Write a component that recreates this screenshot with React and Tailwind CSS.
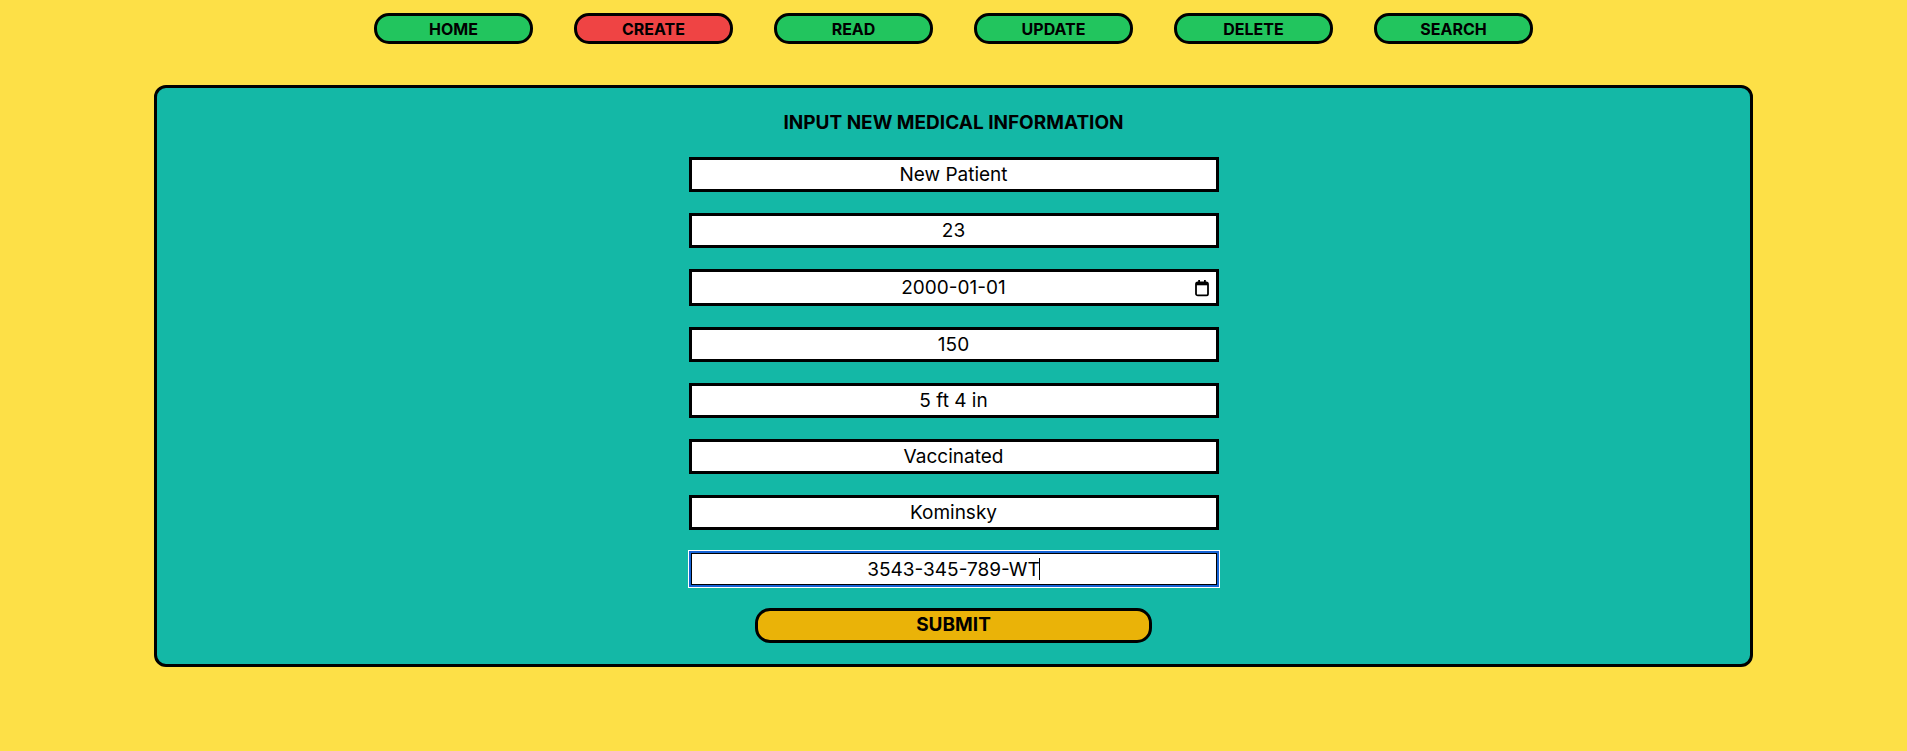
import React from 'react'

const navItems = ['HOME', 'CREATE', 'READ', 'UPDATE', 'DELETE', 'SEARCH']

const fields = [
    { name: 'name', value: 'New Patient' },
    { name: 'age', value: '23' },
    { name: 'dob', value: '2000-01-01', date: true },
    { name: 'weight', value: '150' },
    { name: 'height', value: '5 ft 4 in' },
    { name: 'status', value: 'Vaccinated' },
    { name: 'doctor', value: 'Kominsky' },
]

const CalendarIcon = () => (
    <svg width="14" height="17" viewBox="0 0 14 17" className='absolute right-[10px] top-1/2 -translate-y-1/2' fill="none">
        <rect x="1" y="3" width="12" height="13" rx="1.8" stroke="#000" strokeWidth="1.8" />
        <rect x="1" y="3" width="12" height="2.8" fill="#000" />
        <rect x="3.2" y="0.5" width="1.8" height="3" fill="#000" />
        <rect x="9" y="0.5" width="1.8" height="3" fill="#000" />
    </svg>
)

const App = () => {
    return (
        <div className='min-h-screen w-full bg-[#fde047] pt-[13px] pb-10' style={{ fontFamily: 'Inter, "Noto Sans", sans-serif' }}>
            <nav className='flex justify-center gap-[41px]'>
                {navItems.map(item => (
                    <button key={item} className={`w-[159px] h-[31px] flex items-center justify-center rounded-[15px] border-[3px] border-black text-[16px] font-bold text-black ${item === 'CREATE' ? 'bg-[#ef4444]' : 'bg-[#22c55e]'}`}>
                        {item}
                    </button>
                ))}
            </nav>

            <div className='w-[1599px] mx-auto mt-[41px] bg-[#14b8a6] border-[3px] border-black rounded-xl pt-[21px] pb-[21px] flex flex-col items-center gap-[21px]'>
                <h1 className='text-[19px] leading-[27px] font-bold text-black'>INPUT NEW MEDICAL INFORMATION</h1>

                {fields.map(field => (
                    <div key={field.name} className='relative'>
                        <input
                            name={field.name}
                            readOnly
                            value={field.value}
                            className={`w-[530px] ${field.date ? 'h-[37px]' : 'h-[35px]'} bg-white border-[3px] border-black text-center text-[19px] text-black outline-0`}
                        />
                        {field.date && <CalendarIcon />}
                    </div>
                ))}

                <div className='relative'>
                    <input
                        name='id'
                        readOnly
                        value='3543-345-789-WT'
                        className='w-[530px] h-[36px] bg-white border-[3px] border-black text-center text-[19px] text-black outline-2 outline-offset-[-2px] outline-[#1663d6] shadow-[0_0_0_1px_#ffffff]'
                    />
                    <div className='absolute inset-0 flex items-center justify-center pointer-events-none text-[19px]'>
                        <span className='invisible'>3543-345-789-WT</span>
                        <span className='w-px h-[22px] bg-black'></span>
                    </div>
                </div>

                <button className='w-[397px] h-[35px] bg-[#eab308] border-[3px] border-black rounded-[15px] text-[19px] font-bold text-black flex items-center justify-center'>
                    SUBMIT
                </button>
            </div>
        </div>
    )
}

export default App
